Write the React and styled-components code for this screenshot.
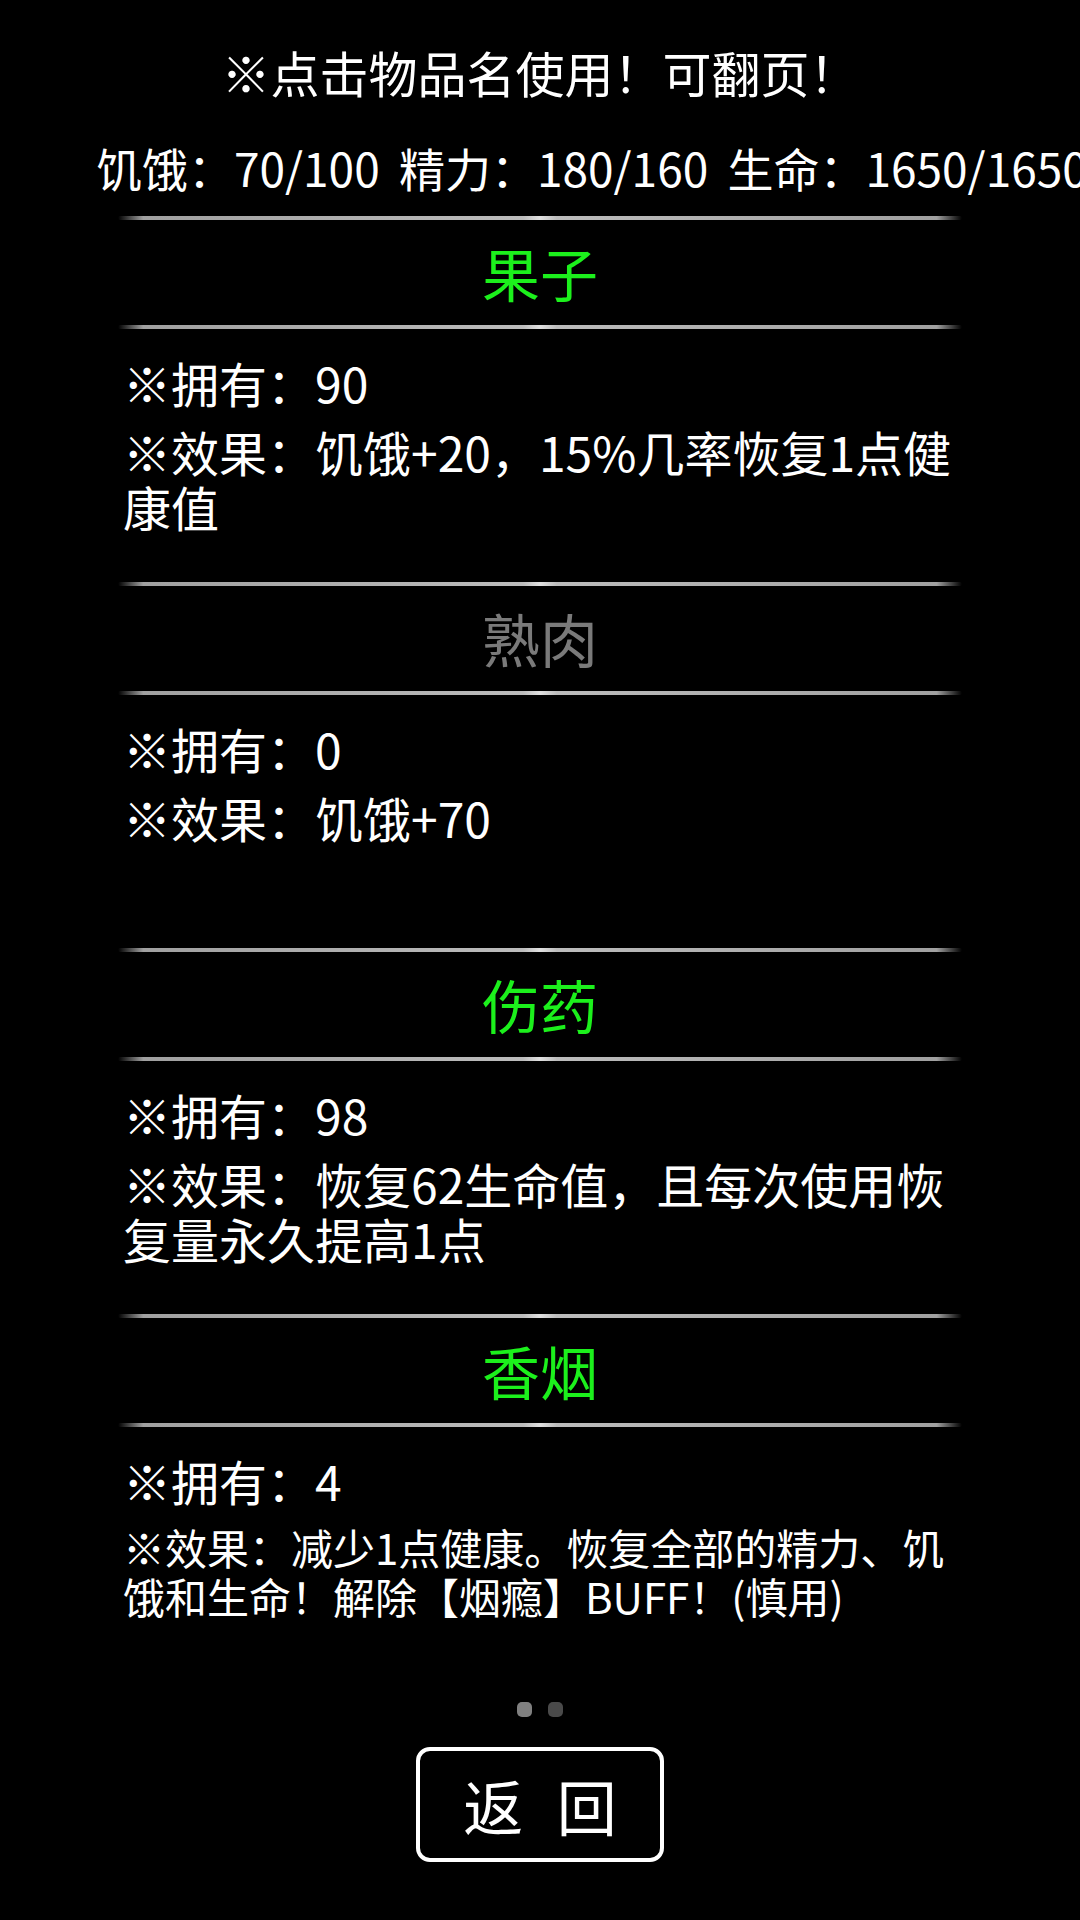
import React from "react"
import styled, { createGlobalStyle } from "styled-components"

const GlobalStyle = createGlobalStyle`
  html, body {
    margin: 0;
    padding: 0;
    background-color: #000000;
  }
  body {
    font-family: "Noto Sans CJK SC", "Noto Sans", sans-serif;
    color: #ffffff;
    overflow: hidden;
  }
`

const Page = styled.div`
  display: flex;
  flex-direction: column;
  width: 1080px;
  min-height: 1920px;
  background-color: #000000;
  overflow: hidden;
`

const Tip = styled.div`
  margin-top: 41px;
  font-size: 49px;
  line-height: 62px;
  text-align: center;
`

const Stats = styled.div`
  margin-top: 34px;
  padding-left: 96px;
  font-size: 46px;
  line-height: 60px;
  word-spacing: 9px;
  white-space: nowrap;
`

const ItemList = styled.div`
  width: 844px;
  margin: 19px auto 0;
`

const Item = styled.div`
  display: flex;
  flex-direction: column;
  height: 366px;
`

const Divider = styled.div`
  height: 4px;
  border-radius: 2px;
  background: linear-gradient(
    to right,
    rgba(160, 160, 160, 0) 0%,
    #a0a0a0 3%,
    #bcbcbc 48%,
    #e0e0e0 50%,
    #bcbcbc 52%,
    #a0a0a0 97%,
    rgba(160, 160, 160, 0) 100%
  );
`

const ItemName = styled.div`
  height: 105px;
  font-size: 58px;
  line-height: 105px;
  text-align: center;
  color: ${(p) => (p.$usable ? "#1cf01c" : "#7a7a7a")};
  cursor: pointer;
`

const ItemBody = styled.div`
  padding: 23px 0 0 5px;
`

const Owned = styled.div`
  font-size: 48px;
  line-height: 60px;
`

const Effect = styled.div`
  margin-top: 12px;
  font-size: ${(p) => (p.$small ? "42px" : "48px")};
  line-height: ${(p) => (p.$small ? "49px" : "55px")};
`

const Dots = styled.div`
  display: flex;
  justify-content: center;
  gap: 16px;
  margin-top: 22px;
`

const Dot = styled.div`
  width: 15px;
  height: 15px;
  border-radius: 5px;
  background-color: ${(p) => (p.$current ? "#808080" : "#4a4a4a")};
`

const BackButton = styled.button`
  display: flex;
  align-items: center;
  justify-content: center;
  box-sizing: border-box;
  width: 248px;
  height: 115px;
  margin: 30px auto 0;
  padding: 0;
  background: #000000;
  border: 4px solid #ffffff;
  border-radius: 14px;
  color: #ffffff;
  font-family: "Noto Sans CJK SC", sans-serif;
  font-size: 60px;
  letter-spacing: 10px;
  text-indent: 10px;
  cursor: pointer;
`

const items = [
  { name: "果子", usable: true, owned: 90, effect: "※效果：饥饿+20，15%几率恢复1点健康值" },
  { name: "熟肉", usable: false, owned: 0, effect: "※效果：饥饿+70" },
  { name: "伤药", usable: true, owned: 98, effect: "※效果：恢复62生命值，且每次使用恢复量永久提高1点" },
  {
    name: "香烟",
    usable: true,
    owned: 4,
    effect: "※效果：减少1点健康。恢复全部的精力、饥饿和生命！解除【烟瘾】BUFF！(慎用)",
    small: true,
  },
]

function App() {
  return (
    <Page>
      <GlobalStyle />
      <Tip>※点击物品名使用！可翻页！</Tip>
      <Stats>饥饿：70/100 精力：180/160 生命：1650/1650</Stats>
      <ItemList>
        {items.map((item) => (
          <Item key={item.name}>
            <Divider />
            <ItemName $usable={item.usable}>{item.name}</ItemName>
            <Divider />
            <ItemBody>
              <Owned>※拥有：{item.owned}</Owned>
              <Effect $small={item.small}>{item.effect}</Effect>
            </ItemBody>
          </Item>
        ))}
      </ItemList>
      <Dots>
        <Dot $current />
        <Dot />
      </Dots>
      <BackButton>返 回</BackButton>
    </Page>
  )
}

export default App
